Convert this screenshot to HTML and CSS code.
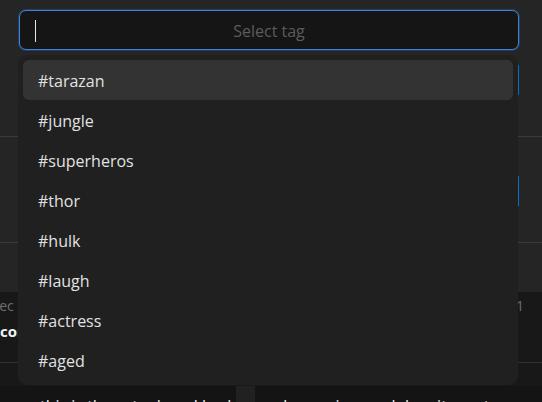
FILE: index.html
```html
<!DOCTYPE html>
<html>
<head>
<meta charset="utf-8">
<link rel="stylesheet" href="styles.css">
</head>
<body>
<div class="page">
  <div class="form">
    <div class="row row-first">
      <div class="tag-input">
        <span class="caret"></span>
        <span class="placeholder">Select tag</span>
      </div>
      <div class="select-box"></div>
    </div>
    <div class="row row-second">
      <div class="select-box"></div>
    </div>
    <div class="row row-third"></div>
  </div>
  <div class="table">
    <div class="thead">
      <div class="th-left">
        <span class="th">Spec</span>
        <span class="td-bold">Icon</span>
      </div>
      <span class="th th-right">Col 1</span>
    </div>
  </div>
  <div class="cards">
    <div class="card"><p class="card-text">this is the actual card body text</p></div>
    <div class="card"><p class="card-text">Lorem ipsum dolor sit amet, con</p></div>
  </div>

  <ul class="dropdown">
    <li class="option active">#tarazan</li>
    <li class="option">#jungle</li>
    <li class="option">#superheros</li>
    <li class="option">#thor</li>
    <li class="option">#hulk</li>
    <li class="option">#laugh</li>
    <li class="option">#actress</li>
    <li class="option">#aged</li>
  </ul>
</div>
</body>
</html>
```
FILE: styles.css
```css
* { box-sizing: border-box; }
html, body { margin: 0; padding: 0; }
body {
  width: 542px;
  height: 402px;
  overflow: hidden;
  background: #141414;
  font-family: "Open Sans", "Noto Sans", "Liberation Sans", sans-serif;
  color: #e3e3e3;
}
.page { position: relative; width: 542px; height: 402px; overflow: hidden; }

.form { background: #252525; }
.row { padding: 0 23px 0 19px; border-bottom: 1px solid #3a3a3a; }
.row-first { padding-top: 10px; height: 137px; }
.row-second { padding-top: 38px; height: 106px; }
.row-third { height: 49px; border-bottom: none; }

.tag-input {
  position: relative;
  height: 40px;
  width: 500px;
  background: #151515;
  border: 1px solid #3b82e0;
  border-radius: 7px;
  box-shadow: 0 0 0 1px rgba(59,130,224,0.25);
  display: flex;
  align-items: center;
  justify-content: center;
  padding-top: 2px;
}
.caret {
  position: absolute;
  left: 15px;
  top: 9px;
  width: 1px;
  height: 22px;
  background: #e8e8e8;
}
.placeholder { color: #5c5c5c; font-size: 16px; }

.select-box {
  margin-top: 14px;
  width: 500px;
  height: 32px;
  border: 1px solid #0b6fc2;
  border-radius: 2px;
}
.row-second .select-box { margin-top: 0; }

.table { background: #181818; height: 94px; overflow: hidden; }
.thead {
  display: flex;
  justify-content: space-between;
  height: 71px;
  border-bottom: 1px solid #303030;
  padding-top: 4px;
  padding-right: 18px;
  font-size: 14px;
}
.th-left {
  display: flex;
  flex-direction: column;
  align-items: flex-start;
  margin-left: -17px;
}
.th { color: #6f6f6f; }
.td-bold {
  color: #f2f2f2;
  font-weight: 700;
  font-size: 15px;
  margin-top: 6px;
  margin-left: 12px;
}

.cards {
  display: grid;
  grid-template-columns: 236px 287px;
  column-gap: 19px;
  background: #212121;
  height: 16px;
}
.card { background: #141414; overflow: hidden; }
.card-text {
  margin: 9px 0 0 40px;
  font-size: 16px;
  color: #f0f0f0;
  white-space: nowrap;
}
.card + .card .card-text { margin-left: 28px; }

.dropdown {
  position: absolute;
  left: 18px;
  top: 55px;
  width: 500px;
  margin: 0;
  padding: 5px;
  list-style: none;
  background: #202020;
  border-radius: 9px;
}
.option {
  height: 40px;
  display: flex;
  align-items: center;
  padding-left: 15px;
  padding-top: 2px;
  font-size: 16px;
  color: #e2e2e2;
  border-radius: 6px;
}
.option.active { background: #333333; }
```
